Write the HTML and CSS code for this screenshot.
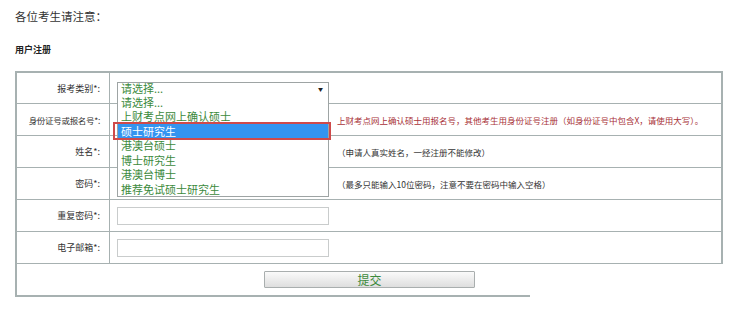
FILE: index.html
```html
<!DOCTYPE html>
<html lang="zh-CN">
<head>
<meta charset="utf-8">
<title>用户注册</title>
<link rel="stylesheet" href="styles.css">
</head>
<body>
<div class="page">
  <p class="notice">各位考生请注意：</p>
  <h3 class="section">用户注册</h3>
  <div class="form">
    <div class="row">
      <div class="label">报考类别*:</div>
      <div class="field">
        <div class="select">
          <span class="select-text">请选择...</span>
          <span class="arrow">▼</span>
          <ul class="options">
            <li>请选择...</li>
            <li>上财考点网上确认硕士</li>
            <li class="selected">硕士研究生</li>
            <li>港澳台硕士</li>
            <li>博士研究生</li>
            <li>港澳台博士</li>
            <li>推荐免试硕士研究生</li>
          </ul>
        </div>
      </div>
    </div>
    <div class="row">
      <div class="label tight">身份证号或报名号*:</div>
      <div class="field">
        <div class="input"></div>
        <span class="hint red">上财考点网上确认硕士用报名号，其他考生用身份证号注册（如身份证号中包含X，请使用大写）。</span>
      </div>
    </div>
    <div class="row">
      <div class="label">姓名*:</div>
      <div class="field">
        <div class="input"></div>
        <span class="hint">（申请人真实姓名，一经注册不能修改）</span>
      </div>
    </div>
    <div class="row">
      <div class="label">密码*:</div>
      <div class="field">
        <div class="input"></div>
        <span class="hint">（最多只能输入10位密码，注意不要在密码中输入空格）</span>
      </div>
    </div>
    <div class="row">
      <div class="label">重复密码*:</div>
      <div class="field">
        <div class="input"></div>
      </div>
    </div>
    <div class="row">
      <div class="label">电子邮箱*:</div>
      <div class="field">
        <div class="input"></div>
      </div>
    </div>
  </div>
  <div class="submit-row">
    <button class="submit" type="button">提交</button>
  </div>
</div>
</body>
</html>
```

FILE: styles.css
```css
* { box-sizing: border-box; }

body {
  margin: 0;
  background: #ffffff;
  font-family: "Noto Sans CJK SC", "Liberation Sans", sans-serif;
  color: #333333;
}

.page {
  padding: 9px 0 0 15px;
}

.notice {
  margin: 0;
  font-size: 11.5px;
  line-height: 14px;
  color: #333333;
}

.section {
  margin: 21px 0 0 0;
  font-size: 9px;
  line-height: 12px;
  font-weight: bold;
  color: #222222;
}

.form {
  margin-top: 15px;
  width: 708px;
  border: 2px solid #a7b1b1;
  border-bottom-width: 1px;
}

.row {
  display: flex;
  height: 32px;
  border-top: 1px solid #a7b1b1;
}

.row:first-child {
  border-top: none;
  height: 30px;
}

.label {
  width: 93px;
  flex: none;
  border-right: 1px solid #a7b1b1;
  display: flex;
  align-items: center;
  justify-content: flex-end;
  padding-right: 9px;
  font-size: 9px;
  color: #333333;
  white-space: nowrap;
}

.label.tight {
  font-size: 8.5px;
  letter-spacing: -0.3px;
}

.field {
  flex: 1;
  display: flex;
  align-items: center;
  padding-left: 7px;
}

.input {
  width: 212px;
  height: 18px;
  border: 1px solid #c9cccc;
  background: #ffffff;
  flex: none;
}

.select {
  position: relative;
  width: 212px;
  height: 14px;
  border: 1px solid #9ea4a4;
  background: #ffffff;
  display: flex;
  align-items: center;
  justify-content: space-between;
  padding: 0 5px 0 3px;
  margin-top: 1px;
}

.select-text {
  font-size: 11px;
  line-height: 11px;
  color: #3c8a3c;
}

.arrow {
  font-size: 5px;
  line-height: 6px;
  color: #222222;
}

.options {
  position: absolute;
  top: 100%;
  left: -1px;
  width: 212px;
  margin: 0;
  padding: 0;
  list-style: none;
  background: #ffffff;
  border: 1px solid #9ea4a4;
  border-top: none;
  z-index: 5;
}

.options li {
  height: 14.5px;
  line-height: 14.5px;
  padding-left: 3px;
  font-size: 11px;
  color: #3c8a3c;
  white-space: nowrap;
}

.options li.selected {
  position: relative;
  background: #3394f0;
  color: #ffffff;
}

.options li.selected::after {
  content: "";
  position: absolute;
  left: -5px;
  right: -3px;
  top: -2px;
  bottom: -2px;
  border: 2px solid #cf4a4a;
}

.hint {
  margin-left: 8px;
  font-size: 8.5px;
  color: #333333;
  white-space: nowrap;
}

.hint.red {
  color: #a83238;
}

.submit-row {
  width: 515px;
  height: 33px;
  border-left: 2px solid #a7b1b1;
  border-bottom: 2px solid #a7b1b1;
  display: flex;
  align-items: center;
  padding-left: 247px;
}

.submit {
  width: 211px;
  height: 17px;
  margin: 0;
  padding: 0;
  border: 1px solid #a9aeae;
  border-radius: 1px;
  background: linear-gradient(#fafafa, #dedede);
  font-family: "Noto Sans CJK SC", "Liberation Sans", sans-serif;
  font-size: 12px;
  line-height: 15px;
  color: #3c8a3c;
}
```
